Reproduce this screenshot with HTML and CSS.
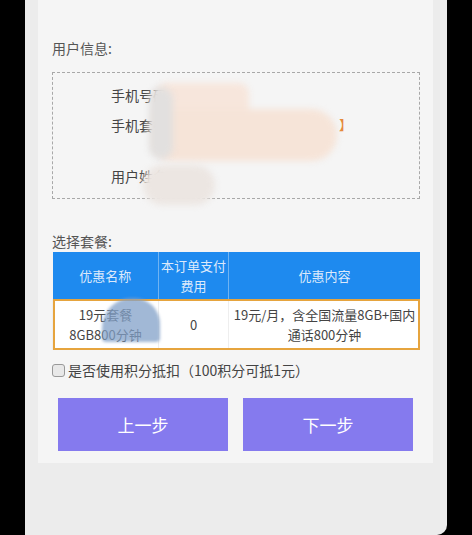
FILE: index.html
```html
<!DOCTYPE html>
<html lang="zh-CN">

<head>
    <meta charset="UTF-8">
    <meta name="viewport" content="width=device-width, initial-scale=1.0">
    <title>选择套餐</title>
    <link rel="stylesheet" href="styles.css">
</head>

<body>
    <div class="screen">
        <div class="card">
            <h2 class="section-title">用户信息:</h2>
            <div class="user-box">
                <div class="info-row">手机号码：</div>
                <div class="info-row">手机套餐：</div>
                <div class="info-row name-row">用户姓名：</div>
                <div class="blur blur-top"></div>
                <div class="blur blur-main"></div>
                <div class="blur blur-grey"></div>
                <div class="blur blur-name"></div>
                <span class="mark">】</span>
            </div>

            <h2 class="section-title plan-title">选择套餐:</h2>
            <div class="plan-wrap">
                <table class="plan-table">
                    <thead>
                        <tr>
                            <th class="col-name">优惠名称</th>
                            <th class="col-fee">本订单支付<br>费用</th>
                            <th>优惠内容</th>
                        </tr>
                    </thead>
                    <tbody>
                        <tr class="selected">
                            <td>19元套餐<br>8GB800分钟</td>
                            <td>0</td>
                            <td>19元/月，含全国流量8GB+国内<br>通话800分钟</td>
                        </tr>
                    </tbody>
                </table>
                <div class="blur blur-cell"></div>
            </div>

            <label class="points">
                <span class="check"></span>
                是否使用积分抵扣（100积分可抵1元）
            </label>

            <div class="actions">
                <button class="step-btn">上一步</button>
                <button class="step-btn">下一步</button>
            </div>
        </div>
    </div>
</body>

</html>
```

FILE: styles.css
```css
* {
    margin: 0;
    padding: 0;
    box-sizing: border-box
}

:root {
    --screen-bg: #ececec;
    --card-bg: #f5f5f5;
    --text-color: #4a4a4a;
    --blue: #1e8aef;
    --orange: #e6a43e;
    --purple: #857aee
}

body {
    background: #000;
    font-family: "Noto Sans CJK SC", "Noto Sans", sans-serif;
    color: var(--text-color);
    height: 535px;
    overflow: hidden
}

.screen {
    margin-left: 25px;
    width: 422px;
    height: 535px;
    background: var(--screen-bg);
    border-bottom-right-radius: 10px
}

.card {
    margin-left: 13px;
    width: 395px;
    height: 463px;
    background: var(--card-bg);
    padding: 38px 13px 0 14px
}

.section-title {
    font-size: 14px;
    font-weight: normal;
    line-height: 20px;
    color: #555
}

.user-box {
    position: relative;
    margin-top: 14px;
    height: 127px;
    border: 1px dashed #a8a8a8;
    padding: 7px 0 0 58px
}

.info-row {
    font-size: 14px;
    line-height: 30px;
    color: #444
}

.name-row {
    margin-top: 21px
}

.blur {
    position: absolute;
    filter: blur(3px);
    border-radius: 30px
}

.blur-top {
    left: 104px;
    top: 10px;
    width: 92px;
    height: 40px;
    background: #f7e6dc;
    border-radius: 10px
}

.blur-main {
    left: 100px;
    top: 36px;
    width: 184px;
    height: 52px;
    background: #f6e4d8;
    border-radius: 12px 40px 40px 30px
}

.blur-grey {
    left: 96px;
    top: 14px;
    width: 24px;
    height: 72px;
    background: #e2e0df
}

.blur-name {
    left: 90px;
    top: 92px;
    width: 72px;
    height: 40px;
    background: #ece6e2
}

.mark {
    position: absolute;
    left: 286px;
    top: 42px;
    font-size: 13px;
    color: #e5893a
}

.plan-title {
    margin-top: 32px
}

.plan-wrap {
    position: relative;
    margin-top: 1px
}

.plan-table {
    width: 368px;
    border-collapse: collapse;
    font-size: 13px;
    text-align: center
}

.plan-table th {
    background: var(--blue);
    color: #dce9fb;
    font-weight: normal;
    height: 47px;
    line-height: 20px;
    border-left: 1px solid #6fb3f2
}

.plan-table th:first-child {
    border-left: none
}

.col-name {
    width: 106px
}

.col-fee {
    width: 70px
}

.plan-table td {
    background: #fff;
    height: 51px;
    line-height: 20px;
    color: #444;
    border-left: 1px solid #eee
}

.plan-table .selected {
    outline: 2px solid var(--orange);
    outline-offset: -2px
}

.blur-cell {
    left: 50px;
    top: 46px;
    width: 58px;
    height: 44px;
    background: rgba(130, 160, 200, 0.75);
    border-radius: 30px 26px 4px 4px;
    filter: blur(1.5px)
}

.points {
    display: flex;
    align-items: center;
    gap: 3px;
    margin-top: 10px;
    font-size: 14px;
    line-height: 20px;
    color: #444
}

.check {
    width: 13px;
    height: 13px;
    border: 1px solid #999;
    border-radius: 3px;
    background: #e8e8e8
}

.actions {
    display: flex;
    gap: 15px;
    margin-top: 18px;
    padding-left: 6px
}

.step-btn {
    width: 170px;
    height: 53px;
    border: none;
    background: var(--purple);
    color: #fff;
    font-family: inherit;
    font-size: 17px
}
```
